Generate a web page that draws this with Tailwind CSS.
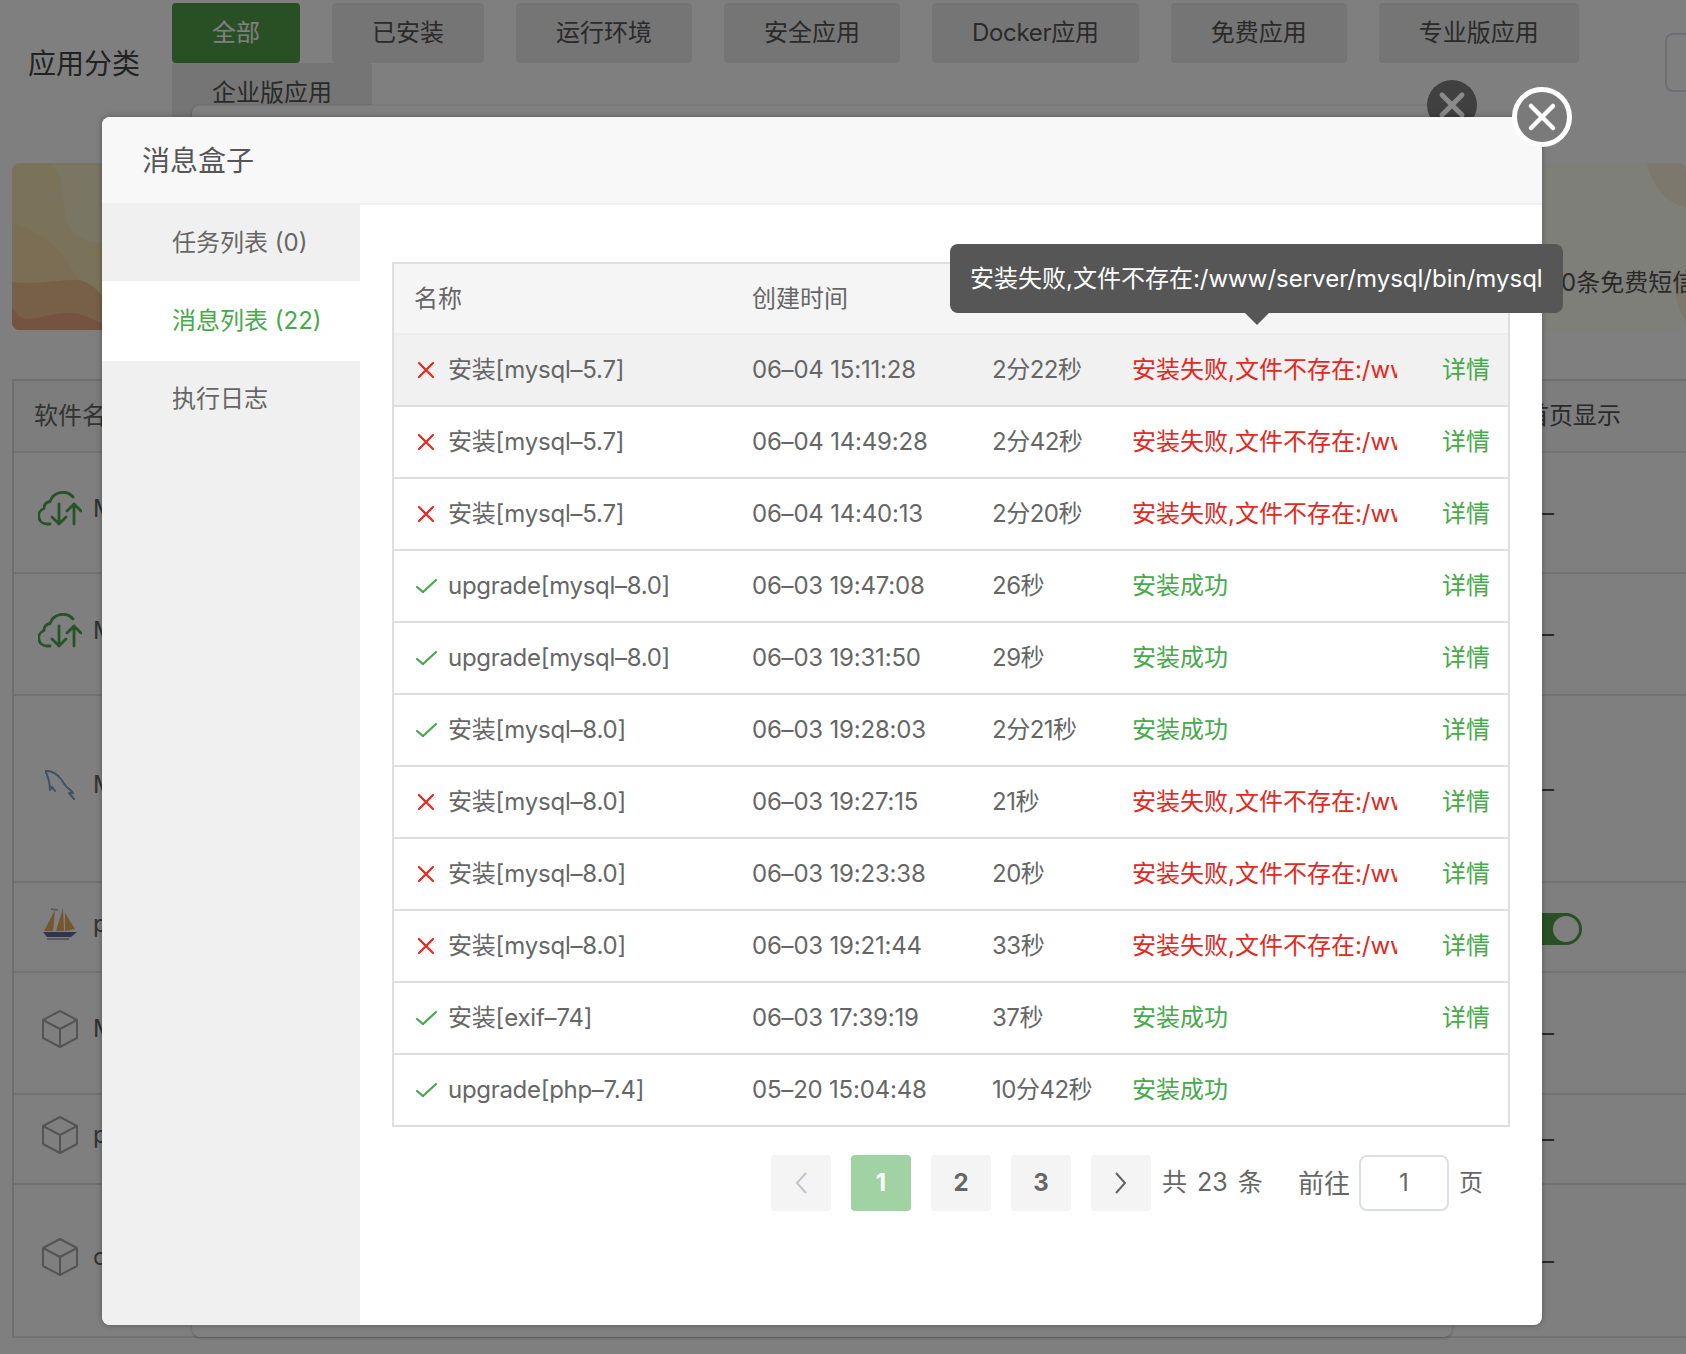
<!DOCTYPE html>
<html lang="zh">
<head>
<meta charset="utf-8">
<script src="https://cdn.jsdelivr.net/npm/@tailwindcss/browser@4"></script>
<title>消息盒子</title>
</head>
<body class="relative h-[1354px] w-[1686px] overflow-hidden bg-white text-[24px] text-[#666] [font-family:'Inter','Noto_Sans_CJK_SC',sans-serif]">

<!-- underlying page -->
<div class="flex h-[123px] pt-[3px] pl-[28px]">
  <div class="mt-[41px] w-[144px] shrink-0 text-[28px] leading-[40px] text-[#444]">应用分类</div>
  <div class="flex w-[1420px] shrink-0 flex-wrap content-start gap-x-[32px] text-[#555]">
    <div class="flex h-[60px] items-center rounded bg-[#52a04a] px-[40px] text-white">全部</div>
    <div class="flex h-[60px] items-center rounded bg-[#eaeaea] px-[40px]">已安装</div>
    <div class="flex h-[60px] items-center rounded bg-[#eaeaea] px-[40px]">运行环境</div>
    <div class="flex h-[60px] items-center rounded bg-[#eaeaea] px-[40px]">安全应用</div>
    <div class="flex h-[60px] items-center rounded bg-[#eaeaea] px-[40px] tracking-[-0.3px]">Docker应用</div>
    <div class="flex h-[60px] items-center rounded bg-[#eaeaea] px-[40px]">免费应用</div>
    <div class="flex h-[60px] items-center rounded bg-[#eaeaea] px-[40px]">专业版应用</div>
    <div class="flex h-[60px] items-center rounded bg-[#eaeaea] px-[40px]">企业版应用</div>
  </div>
  <div class="mt-[30px] ml-[73px] h-[59px] w-[60px] shrink-0 rounded-l-lg border-2 border-[#dcdfe6]"></div>
</div>

<div class="relative mt-[40px] ml-[12px] h-[167px] w-[1674px] overflow-hidden rounded-lg bg-[#fffef4]">
  <svg class="absolute inset-0 h-full w-full" viewBox="0 0 1674 167" preserveAspectRatio="none">
    <rect x="0" y="0" width="100" height="167" fill="#f6e6b2"/>
    <path d="M38 0 C48 6 51 22 53 50 C56 70 70 82 100 80 V0 Z" fill="#f2ecc6"/>
    <path d="M0 60 C30 68 55 90 66 118 L100 147 V167 H0 Z" fill="#f6dca8"/>
    <path d="M0 119 C30 122 44 116 66 117 C80 118 92 134 100 146 V167 H0 Z" fill="#eec08e"/>
    <path d="M0 145 C12 164 24 153 50 150 C70 148 90 160 100 167 H0 Z" fill="#e8a880"/>
    <path d="M1635 0 C1640 28 1660 42 1674 45 V0 Z" fill="#f8f0dc"/>
    <path d="M1662 110 C1662 130 1666 150 1674 158 V110 Z" fill="#f8f0dc"/>
  </svg>
  <div class="absolute top-[107px] left-[1549px] whitespace-nowrap text-[24px] leading-[26px] text-[#555]">0条免费短信</div>
</div>

<div class="mt-[49px] ml-[12px] w-[1674px] border-l-2 border-t-2 border-[#dddddd]">
  <div class="flex h-[72px] items-center border-b-2 border-[#e4e4e4] bg-[#fbfbfb] pl-[20px]"><span>软件名称</span><span class="ml-auto w-[161px] text-[#555]">首页显示</span></div>
  <div class="flex h-[121px] items-center border-b-2 border-[#e4e4e4] pl-[24px]">
    <svg class="mb-[8px] shrink-0" width="44" height="36" viewBox="0 0 44 36" fill="none" stroke="#50a450" stroke-width="2.800" stroke-linecap="round" stroke-linejoin="round"><path d="M12 33H9A8 8 0 0 1 6 17.500C6 13 9 11 12 10.500A13.500 13.500 0 0 1 35 6"/><path d="M21 13V33M14 26l7 7 7-7M36 33V13M29 20l7-7 7 7"/></svg>
    <span class="mb-[8px] ml-[11px]">Memcached</span><span class="ml-auto w-[161px] pl-[5px] text-[#555]">—</span></div>
  <div class="flex h-[122px] items-center border-b-2 border-[#e4e4e4] pl-[24px]">
    <svg class="mb-[6px] shrink-0" width="44" height="36" viewBox="0 0 44 36" fill="none" stroke="#50a450" stroke-width="2.800" stroke-linecap="round" stroke-linejoin="round"><path d="M12 33H9A8 8 0 0 1 6 17.500C6 13 9 11 12 10.500A13.500 13.500 0 0 1 35 6"/><path d="M21 13V33M14 26l7 7 7-7M36 33V13M29 20l7-7 7 7"/></svg>
    <span class="mb-[6px] ml-[11px]">MongoDB</span><span class="ml-auto w-[161px] pl-[5px] text-[#555]">—</span></div>
  <div class="flex h-[187px] items-center border-b-2 border-[#e4e4e4] pl-[31px]">
    <svg class="mb-[8px] shrink-0" width="30" height="30" viewBox="0 0 30 30" fill="none" stroke="#7ea6cc" stroke-width="2" stroke-linecap="round" stroke-linejoin="round"><path d="M0.500 1C6 0.500 12 4 16 9C19 13 20 17 24 19C26 20 27 22 28 23L24 23L29 29"/><path d="M0.500 1C2 5 5 10 5 20C6 19 6.500 18 7 17C8 18 9 19.500 10 21"/></svg>
    <span class="mb-[8px] ml-[18px]">MySQL 8.0</span><span class="ml-auto w-[161px] pl-[5px] text-[#555]">—</span></div>
  <div class="flex h-[90px] items-center border-b-2 border-[#e4e4e4] pl-[29px]">
    <svg class="mb-[6px] shrink-0" width="34" height="32" viewBox="0 0 34 32"><path d="M1 23L12 2L10 23Z" fill="#e8ae5c"/><path d="M13 23L20 0L21 23Z" fill="#e8ae5c"/><path d="M22 5L32 21L22 23Z" fill="#e8ae5c"/><path d="M8 0L15 1L14 3L8 2Z" fill="#bbbbbb"/><path d="M0 24H34L28 29H4Z" fill="#6068a8"/><path d="M4 31H26" stroke="#999" stroke-width="1.500"/></svg>
    <span class="mb-[6px] ml-[16px]">php</span>
    <span class="mt-[4px] ml-auto w-[161px]"><span class="relative ml-[-7px] block h-[32px] w-[64px] rounded-full bg-[#52a04a]"><span class="absolute top-[3px] right-[3px] h-[26px] w-[26px] rounded-full bg-white"></span></span></span></div>
  <div class="flex h-[122px] items-center border-b-2 border-[#e4e4e4] pl-[28px]">
    <svg class="mb-[8px] shrink-0" width="36" height="38" viewBox="0 0 36 38" fill="none" stroke="#a8a8a8" stroke-width="2" stroke-linejoin="round"><path d="M18 1L35 10V28L18 37L1 28V10Z"/><path d="M1 10L18 19L35 10M18 19V37"/></svg>
    <span class="mb-[8px] ml-[15px]">Memcached</span><span class="ml-auto w-[161px] pl-[5px] text-[#555]">—</span></div>
  <div class="flex h-[90px] items-center border-b-2 border-[#e4e4e4] pl-[28px]">
    <svg class="mb-[8px] shrink-0" width="36" height="38" viewBox="0 0 36 38" fill="none" stroke="#a8a8a8" stroke-width="2" stroke-linejoin="round"><path d="M18 1L35 10V28L18 37L1 28V10Z"/><path d="M1 10L18 19L35 10M18 19V37"/></svg>
    <span class="mb-[8px] ml-[15px]">phpMyAdmin</span><span class="ml-auto w-[161px] pl-[5px] text-[#555]">—</span></div>
  <div class="flex h-[153px] items-center border-b-2 border-[#e4e4e4] pl-[28px]">
    <svg class="mb-[8px] shrink-0" width="36" height="38" viewBox="0 0 36 38" fill="none" stroke="#a8a8a8" stroke-width="2" stroke-linejoin="round"><path d="M18 1L35 10V28L18 37L1 28V10Z"/><path d="M1 10L18 19L35 10M18 19V37"/></svg>
    <span class="mb-[8px] ml-[15px]">opcache</span><span class="ml-auto w-[161px] pl-[5px] text-[#555]">—</span></div>
</div>

<!-- backdrop -->
<div class="absolute inset-0 bg-black/50"></div>

<!-- window behind -->
<div class="absolute top-[105px] left-[192px] h-[1232px] w-[1260px] rounded-lg border-t border-[#777] bg-[#808080] shadow-[0_1px_3px_rgba(0,0,0,0.25)]"></div>
<div class="absolute top-[80px] left-[1427px] flex h-[50px] w-[50px] items-center justify-center rounded-full bg-[#404040]">
  <svg width="28" height="28" viewBox="0 0 28 28" stroke="#8a8a8a" stroke-width="5" stroke-linecap="round"><path d="M4 4L24 24M24 4L4 24"/></svg>
</div>

<!-- dialog -->
<div class="absolute top-[117px] left-[102px] flex h-[1208px] w-[1440px] flex-col overflow-hidden rounded-lg bg-white shadow-[0_0_6px_rgba(0,0,0,0.3)]">
  <div class="flex h-[88px] shrink-0 items-center border-b-2 border-[#f0f0f0] bg-[#f8f8f8] pt-[2px] pl-[40px] text-[28px] text-[#555]">消息盒子</div>
  <div class="flex min-h-0 flex-1">
    <div class="w-[258px] shrink-0 bg-[#f0f0f0] text-[#666]">
      <div class="flex h-[76px] items-center pl-[70px]">任务列表 (0)</div>
      <div class="flex h-[80px] items-center bg-white pl-[70px] text-[#46a94a]">消息列表 (22)</div>
      <div class="flex h-[75px] items-center pl-[70px]">执行日志</div>
    </div>
    <div class="flex-1 pt-[57px] pl-[32px]">
      <div class="w-[1118px] border-x-2 border-t-2 border-[#dfdfdf]">
        <div class="grid h-[71px] grid-cols-[358px_240px_140px_310px_1fr] items-center border-b-2 border-[#eeeeee] bg-[#f5f5f5]">
          <span class="pl-[20px]">名称</span><span>创建时间</span><span>耗时</span><span>状态</span><span>操作</span>
        </div>

        <div class="grid h-[72px] grid-cols-[358px_240px_140px_310px_1fr] items-center border-b-2 border-[#dfdfdf] bg-[#f1f1f2]">
          <span class="flex items-center pl-[23px] tracking-[-0.2px]"><svg class="mr-[13px] shrink-0" width="18" height="18" viewBox="0 0 18 18" stroke="#e5281f" stroke-width="2.200" stroke-linecap="round"><path d="M2 2L16 16M16 2L2 16"/></svg>安装[mysql–5.7]</span>
          <span class="tracking-[-0.2px]">06–04 15:11:28</span><span class="tracking-[-0.5px]">2分22秒</span>
          <span class="w-[265px] overflow-hidden whitespace-nowrap text-[#e5281f]">安装失败,文件不存在:/www/server/mysql/bin/mysql</span><span class="text-[#46a94a]">详情</span>
        </div>
        <div class="grid h-[72px] grid-cols-[358px_240px_140px_310px_1fr] items-center border-b-2 border-[#dfdfdf]">
          <span class="flex items-center pl-[23px] tracking-[-0.2px]"><svg class="mr-[13px] shrink-0" width="18" height="18" viewBox="0 0 18 18" stroke="#e5281f" stroke-width="2.200" stroke-linecap="round"><path d="M2 2L16 16M16 2L2 16"/></svg>安装[mysql–5.7]</span>
          <span class="tracking-[-0.2px]">06–04 14:49:28</span><span class="tracking-[-0.5px]">2分42秒</span>
          <span class="w-[265px] overflow-hidden whitespace-nowrap text-[#e5281f]">安装失败,文件不存在:/www/server/mysql/bin/mysql</span><span class="text-[#46a94a]">详情</span>
        </div>
        <div class="grid h-[72px] grid-cols-[358px_240px_140px_310px_1fr] items-center border-b-2 border-[#dfdfdf]">
          <span class="flex items-center pl-[23px] tracking-[-0.2px]"><svg class="mr-[13px] shrink-0" width="18" height="18" viewBox="0 0 18 18" stroke="#e5281f" stroke-width="2.200" stroke-linecap="round"><path d="M2 2L16 16M16 2L2 16"/></svg>安装[mysql–5.7]</span>
          <span class="tracking-[-0.2px]">06–04 14:40:13</span><span class="tracking-[-0.5px]">2分20秒</span>
          <span class="w-[265px] overflow-hidden whitespace-nowrap text-[#e5281f]">安装失败,文件不存在:/www/server/mysql/bin/mysql</span><span class="text-[#46a94a]">详情</span>
        </div>
        <div class="grid h-[72px] grid-cols-[358px_240px_140px_310px_1fr] items-center border-b-2 border-[#dfdfdf]">
          <span class="flex items-center pl-[21px] tracking-[-0.3px]"><svg class="mr-[10px] shrink-0" width="23" height="18" viewBox="0 0 23 18" fill="none" stroke="#46a94a" stroke-width="2.200" stroke-linecap="round"><path d="M2 10L8 15L21 3"/></svg>upgrade[mysql–8.0]</span>
          <span class="tracking-[-0.2px]">06–03 19:47:08</span><span class="tracking-[-0.5px]">26秒</span>
          <span class="text-[#46a94a]">安装成功</span><span class="text-[#46a94a]">详情</span>
        </div>
        <div class="grid h-[72px] grid-cols-[358px_240px_140px_310px_1fr] items-center border-b-2 border-[#dfdfdf]">
          <span class="flex items-center pl-[21px] tracking-[-0.3px]"><svg class="mr-[10px] shrink-0" width="23" height="18" viewBox="0 0 23 18" fill="none" stroke="#46a94a" stroke-width="2.200" stroke-linecap="round"><path d="M2 10L8 15L21 3"/></svg>upgrade[mysql–8.0]</span>
          <span class="tracking-[-0.2px]">06–03 19:31:50</span><span class="tracking-[-0.5px]">29秒</span>
          <span class="text-[#46a94a]">安装成功</span><span class="text-[#46a94a]">详情</span>
        </div>
        <div class="grid h-[72px] grid-cols-[358px_240px_140px_310px_1fr] items-center border-b-2 border-[#dfdfdf]">
          <span class="flex items-center pl-[21px] tracking-[-0.2px]"><svg class="mr-[10px] shrink-0" width="23" height="18" viewBox="0 0 23 18" fill="none" stroke="#46a94a" stroke-width="2.200" stroke-linecap="round"><path d="M2 10L8 15L21 3"/></svg>安装[mysql–8.0]</span>
          <span class="tracking-[-0.2px]">06–03 19:28:03</span><span class="tracking-[-0.5px]">2分21秒</span>
          <span class="text-[#46a94a]">安装成功</span><span class="text-[#46a94a]">详情</span>
        </div>
        <div class="grid h-[72px] grid-cols-[358px_240px_140px_310px_1fr] items-center border-b-2 border-[#dfdfdf]">
          <span class="flex items-center pl-[23px] tracking-[-0.2px]"><svg class="mr-[13px] shrink-0" width="18" height="18" viewBox="0 0 18 18" stroke="#e5281f" stroke-width="2.200" stroke-linecap="round"><path d="M2 2L16 16M16 2L2 16"/></svg>安装[mysql–8.0]</span>
          <span class="tracking-[-0.2px]">06–03 19:27:15</span><span class="tracking-[-0.5px]">21秒</span>
          <span class="w-[265px] overflow-hidden whitespace-nowrap text-[#e5281f]">安装失败,文件不存在:/www/server/mysql/bin/mysql</span><span class="text-[#46a94a]">详情</span>
        </div>
        <div class="grid h-[72px] grid-cols-[358px_240px_140px_310px_1fr] items-center border-b-2 border-[#dfdfdf]">
          <span class="flex items-center pl-[23px] tracking-[-0.2px]"><svg class="mr-[13px] shrink-0" width="18" height="18" viewBox="0 0 18 18" stroke="#e5281f" stroke-width="2.200" stroke-linecap="round"><path d="M2 2L16 16M16 2L2 16"/></svg>安装[mysql–8.0]</span>
          <span class="tracking-[-0.2px]">06–03 19:23:38</span><span class="tracking-[-0.5px]">20秒</span>
          <span class="w-[265px] overflow-hidden whitespace-nowrap text-[#e5281f]">安装失败,文件不存在:/www/server/mysql/bin/mysql</span><span class="text-[#46a94a]">详情</span>
        </div>
        <div class="grid h-[72px] grid-cols-[358px_240px_140px_310px_1fr] items-center border-b-2 border-[#dfdfdf]">
          <span class="flex items-center pl-[23px] tracking-[-0.2px]"><svg class="mr-[13px] shrink-0" width="18" height="18" viewBox="0 0 18 18" stroke="#e5281f" stroke-width="2.200" stroke-linecap="round"><path d="M2 2L16 16M16 2L2 16"/></svg>安装[mysql–8.0]</span>
          <span class="tracking-[-0.2px]">06–03 19:21:44</span><span class="tracking-[-0.5px]">33秒</span>
          <span class="w-[265px] overflow-hidden whitespace-nowrap text-[#e5281f]">安装失败,文件不存在:/www/server/mysql/bin/mysql</span><span class="text-[#46a94a]">详情</span>
        </div>
        <div class="grid h-[72px] grid-cols-[358px_240px_140px_310px_1fr] items-center border-b-2 border-[#dfdfdf]">
          <span class="flex items-center pl-[21px] tracking-[-0.2px]"><svg class="mr-[10px] shrink-0" width="23" height="18" viewBox="0 0 23 18" fill="none" stroke="#46a94a" stroke-width="2.200" stroke-linecap="round"><path d="M2 10L8 15L21 3"/></svg>安装[exif–74]</span>
          <span class="tracking-[-0.2px]">06–03 17:39:19</span><span class="tracking-[-0.5px]">37秒</span>
          <span class="text-[#46a94a]">安装成功</span><span class="text-[#46a94a]">详情</span>
        </div>
        <div class="grid h-[72px] grid-cols-[358px_240px_140px_310px_1fr] items-center border-b-2 border-[#dfdfdf]">
          <span class="flex items-center pl-[21px] tracking-[-0.3px]"><svg class="mr-[10px] shrink-0" width="23" height="18" viewBox="0 0 23 18" fill="none" stroke="#46a94a" stroke-width="2.200" stroke-linecap="round"><path d="M2 10L8 15L21 3"/></svg>upgrade[php–7.4]</span>
          <span class="tracking-[-0.2px]">05–20 15:04:48</span><span class="tracking-[-0.5px]">10分42秒</span>
          <span class="text-[#46a94a]">安装成功</span><span></span>
        </div>
      </div>

      <div class="mt-[28px] ml-[379px] flex items-center">
        <div class="flex gap-[20px] font-bold">
          <div class="flex h-[56px] w-[60px] items-center justify-center rounded bg-[#f4f4f5]"><svg width="14" height="24" viewBox="0 0 14 24" fill="none" stroke="#c0c4cc" stroke-width="2"><path d="M12 2L3 12L12 22"/></svg></div>
          <div class="flex h-[56px] w-[60px] items-center justify-center rounded bg-[#a0d2a3] text-white">1</div>
          <div class="flex h-[56px] w-[60px] items-center justify-center rounded bg-[#f4f4f5]">2</div>
          <div class="flex h-[56px] w-[60px] items-center justify-center rounded bg-[#f4f4f5]">3</div>
          <div class="flex h-[56px] w-[60px] items-center justify-center rounded bg-[#f4f4f5]"><svg width="14" height="24" viewBox="0 0 14 24" fill="none" stroke="#606266" stroke-width="2"><path d="M2 2L11 12L2 22"/></svg></div>
        </div>
        <span class="ml-[11px] w-[136px] whitespace-nowrap text-[25px] [word-spacing:3px]">共 23 条</span>
        <span class="w-[52px] whitespace-nowrap text-[26px]">前往</span>
        <div class="ml-[9px] flex h-[56px] w-[90px] items-center justify-center rounded-lg border-2 border-[#dcdfe6]">1</div>
        <span class="ml-[10px]">页</span>
      </div>
    </div>
  </div>
</div>

<!-- dialog close -->
<div class="absolute top-[87px] left-[1512px] flex h-[60px] w-[60px] items-center justify-center rounded-full border-[5px] border-white bg-[#7a7a7a]">
  <svg width="30" height="30" viewBox="0 0 30 30" stroke="#ffffff" stroke-width="4.500" stroke-linecap="round"><path d="M4 4L26 26M26 4L4 26"/></svg>
</div>

<!-- tooltip -->
<div class="absolute top-[244px] left-[950px] flex h-[69px] w-[613px] items-center rounded-lg bg-[#565656] px-[20px] text-white">
  <div class="w-full overflow-hidden whitespace-nowrap">安装失败,文件不存在:/www/server/mysql/bin/mysql-8.0</div>
</div>
<svg class="absolute top-[313px] left-[1245px]" width="24" height="12" viewBox="0 0 24 12"><path d="M0 0H24L12 12Z" fill="#565656"/></svg>

</body>
</html>
